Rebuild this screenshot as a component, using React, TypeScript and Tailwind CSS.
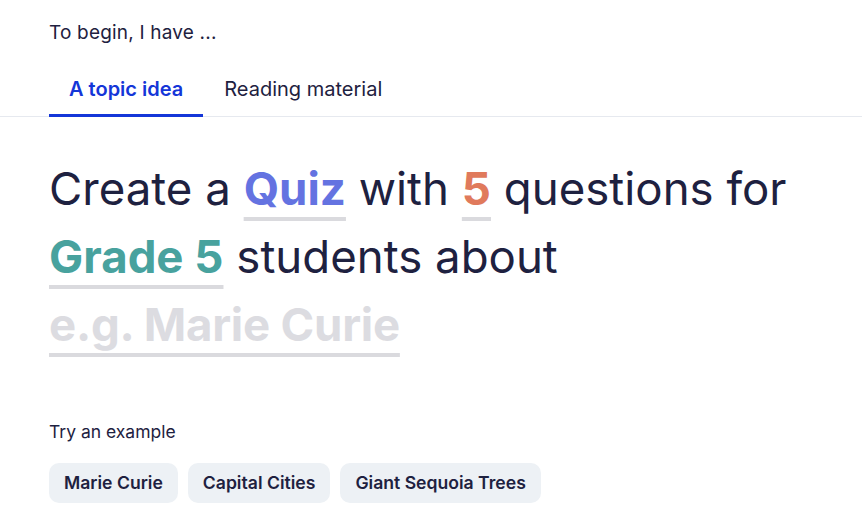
import { useState } from "react"

const examples = ["Marie Curie", "Capital Cities", "Giant Sequoia Trees"]

export default function App() {
  const [tab, setTab] = useState(0)

  return (
    <div className="min-h-screen bg-white font-['Inter',sans-serif] text-[#1e2140]">
      <div className="pt-[20px]">
        <p className="px-[49px] text-[19px] leading-[26px] tracking-[0.01em]">To begin, I have ...</p>

        {/* Tabs */}
        <div className="mt-[26px] flex border-b border-[#e6e9ef] pl-[49px]">
          {["A topic idea", "Reading material"].map((label, i) => (
            <button
              key={label}
              onClick={() => setTab(i)}
              className={
                i === tab
                  ? "-mb-px border-b-[3px] border-[#1436d8] px-[20px] pb-[10px] pt-[2px] text-[20px] font-semibold text-[#1436d8]"
                  : "-mb-px border-b-[3px] border-transparent px-[21px] pb-[10px] pt-[2px] text-[20px] text-[#1e2140]"
              }
            >
              {label}
            </button>
          ))}
        </div>

        {/* Prompt sentence */}
        <div className="mt-[38px] px-[49px] text-[45.6px] leading-[68px]">
          <p>
            Create a{" "}
            <span className="font-bold text-[#6473e1] underline decoration-[#dadade] decoration-4 underline-offset-[12px]">Quiz</span>{" "}
            with{" "}
            <span className="font-bold text-[#e07a5c] underline decoration-[#dadade] decoration-4 underline-offset-[12px]">5</span>{" "}
            questions for{" "}
            <span className="font-bold text-[#48a29e] underline decoration-[#dadade] decoration-4 underline-offset-[12px]">Grade 5</span>{" "}
            students about
          </p>
          <p className="font-bold tracking-[-0.005em] text-[#dcdce1] underline decoration-[#dadade] decoration-4 underline-offset-[12px]">
            e.g. Marie Curie
          </p>
        </div>

        {/* Examples */}
        <div className="mt-[61px] px-[49px]">
          <p className="text-[17.5px] leading-6">Try an example</p>
          <div className="mt-[19px] flex gap-[10px]">
            {examples.map((ex) => (
              <button
                key={ex}
                className="h-[40px] rounded-[10px] bg-[#edf1f5] px-[15px] text-[17.6px] font-semibold text-[#1e2140]"
              >
                {ex}
              </button>
            ))}
          </div>
        </div>
      </div>
    </div>
  )
}
